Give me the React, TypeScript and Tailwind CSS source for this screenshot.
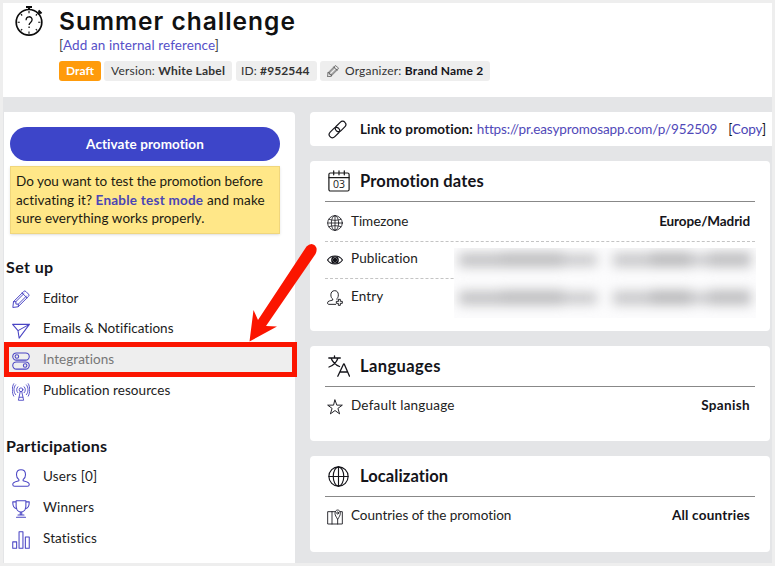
import type { ReactNode } from "react";

interface IconProps {
  className?: string;
}

function Svg({ className = "size-[18px]", children, box = 24, stroke = 1.4 }: IconProps & { children: ReactNode; box?: number; stroke?: number }) {
  return (
    <svg
      viewBox={`0 0 ${box} ${box}`}
      className={`shrink-0 ${className}`}
      fill="none"
      stroke="currentColor"
      strokeWidth={stroke}
      strokeLinecap="round"
      strokeLinejoin="round"
    >
      {children}
    </svg>
  );
}

function StopwatchIcon() {
  return (
    <svg viewBox="0 0 28 30" className="h-[30px] w-7 shrink-0" fill="none" stroke="#0c0c0c" strokeWidth="1.7">
      <circle cx="14" cy="16.3" r="12.8" />
      <path d="M11 1h6M14 1v3M23.5 4.5l3 3M25 6l-2 2" strokeWidth="2" />
      <path d="M14 5v2.2M14 25.5v2.2M2.6 16.3h2.2M23.2 16.3h2.2M5.9 8.2l1.3 1.3M22.1 8.2l-1.3 1.3M5.9 24.4l1.3-1.3M22.1 24.4l-1.3-1.3" strokeWidth="1.1" />
      <path d="M11.1 14.2c0-4.600 6-4.400 6-.4 0 2.600-3 2.600-3 5.200M14.1 20.500v1.600" strokeWidth="1.3" />
    </svg>
  );
}

function PencilIcon({ className }: IconProps) {
  return (
    <Svg className={className} stroke={1.3}>
      <path d="M1.2 22.8 2 15.5 15.5 2q1.5-1.5 3 0l3.5 3.5q1.5 1.5 0 3L8.5 22zM2 15.5h3.2v3.3h3.3V22M13.5 4l6.5 6.5M5.2 15.5 16 4.8M8.5 18.8 19.3 8" />
    </Svg>
  );
}

function SendIcon({ className }: IconProps) {
  return (
    <Svg className={className}>
      <path d="M.8 4.5h22.4L9.5 22.8 8 12.8zM8 12.8l15.2-8.3" />
    </Svg>
  );
}

function TogglesIcon({ className }: IconProps) {
  return (
    <Svg className={className}>
      <rect x="1" y="1.2" width="22" height="9.6" rx="4.8" />
      <circle cx="6.5" cy="6" r="2.4" />
      <rect x="1" y="13.2" width="22" height="9.6" rx="4.8" />
      <circle cx="17.5" cy="18" r="2.4" />
    </Svg>
  );
}

function AntennaIcon({ className }: IconProps) {
  return (
    <Svg className={className} stroke={1.2}>
      <circle cx="12" cy="9" r="2.5" />
      <path d="M11 11.5 8.5 23h7L13 11.5M9.6 19h4.8M7.8 13c-2.200-2.200-2.200-5.800 0-8M16.200 13c2.200-2.200 2.200-5.800 0-8M4.800 15.500c-3-3.500-3-9.500 0-13M19.200 15.500c3-3.500 3-9.500 0-13M2.300 17.500c-2.600-4.500-2.600-12.500 0-16.500M21.700 17.500c2.600-4.500 2.600-12.500 0-16.500" />
    </Svg>
  );
}

function UserIcon({ className }: IconProps) {
  return (
    <Svg className={className}>
      <path d="M12 1c-4 0-6 2.800-6 6.500 0 3.400 1.500 5.500 3.200 6.700v1.600C5 17 1 17.200 1 20.500 1 22.300 2 23 3.500 23h17c1.500 0 2.500-.700 2.500-2.500 0-3.300-4-3.500-8.200-4.700v-1.600C16.500 13 18 10.900 18 7.500 18 3.800 16 1 12 1z" />
    </Svg>
  );
}

function TrophyIcon({ className }: IconProps) {
  return (
    <Svg className={className}>
      <path d="M5.500 1h13v7c0 5-3 8-6.500 8s-6.500-3-6.500-8zM5.500 2.500H1c0 6 2 8.500 5.300 9M18.500 2.500H23c0 6-2 8.500-5.300 9M11 16v4M13 16v4M8 20h8M6 23h12" />
    </Svg>
  );
}

function StatsIcon({ className }: IconProps) {
  return (
    <Svg className={className}>
      <path d="M1 14.500h5.200V23H1zM9.400 1h5.200v22H9.400zM17.800 8H23v15h-5.200z" />
    </Svg>
  );
}

function LinkIcon() {
  return (
    <Svg className="size-[19px]" stroke={1.5}>
      <path d="M10.500 13.500C8.600 11.500 8.700 9.600 10.400 7.900l5-5c2-2 4.400-1.900 6 0 1.700 1.800 1.600 4-.200 5.800l-4.700 4.700c-1.900 1.900-4 1.800-6 .100" />
      <path d="M13.500 10.500c1.900 2 1.800 3.900.100 5.600l-5 5c-2 2-4.400 1.900-6 0-1.700-1.800-1.600-4 .200-5.800l4.700-4.700c1.900-1.900 4-1.800 6-.100" />
    </Svg>
  );
}

function CalendarIcon() {
  return (
    <div className="relative h-[22px] w-[22px] shrink-0 text-[#191919]">
      <Svg className="size-[22px]" box={22} stroke={1.2}>
        <rect x=".9" y="3" width="20.200" height="18" rx="1.500" />
        <path d="M1 7.700h20M5.700.800v4M11 .800v4M16.300.800v4" />
      </Svg>
      <span className="absolute inset-x-0 top-[8px] text-center font-['Open_Sans',sans-serif] text-[10.500px] leading-[12px] font-medium">03</span>
    </div>
  );
}

function GlobeIcon({ className }: IconProps) {
  return (
    <Svg className={className} stroke={1.2}>
      <circle cx="12" cy="12" r="11" />
      <ellipse cx="12" cy="12" rx="5.500" ry="11" />
      <path d="M12 1v22M1 12h22M3 6.500c5 2 13 2 18 0M3 17.500c5-2 13-2 18 0" />
    </Svg>
  );
}

function BigGlobeIcon() {
  return (
    <Svg className="mr-px size-[21px]" stroke={1.300}>
      <circle cx="12" cy="12" r="11" />
      <ellipse cx="12" cy="12" rx="6" ry="11" />
      <path d="M12 1v22M1 12h22" />
    </Svg>
  );
}

function EyeIcon() {
  return (
    <Svg className="size-4" stroke={1.800}>
      <path d="M.8 12C6 4 18 4 23.200 12 18 20 6 20 .8 12z" />
      <circle cx="12" cy="12" r="4.700" strokeWidth="2.200" />
      <circle cx="12" cy="12" r="2.400" fill="currentColor" />
    </Svg>
  );
}

function UserPlusIcon() {
  return (
    <Svg className="size-4">
      <path d="M13 21.500H3c-1.500 0-2.200-.700-2.200-2.200 0-3 4-3 7.800-4.200v-1.500C7 12.500 5.800 10.500 5.800 7.200 5.800 3.500 8 1 11.500 1S17 3.500 17 7.200c0 3.300-1 5.300-2.500 6.400" />
      <path d="M17 14h3v3h3v3h-3v3h-3v-3h-3v-3h3z" />
    </Svg>
  );
}

function TranslateIcon() {
  return (
    <Svg className="size-[22px]" box={22} stroke={1.300}>
      <path d="M.8 3h11.500M6.500.800V3M3 3c1.500 4 5 7 8.500 8.500M10 3C8.500 7.500 5 10.500 1 12M9.800 21.200 15.600 9h.6L21.500 21.200M12 17h7.700" />
    </Svg>
  );
}

function StarIcon() {
  return (
    <Svg className="size-4" stroke={1.400}>
      <path d="m12 1.500 2.700 7.700H23l-6.600 4.900 2.500 8.200-6.900-5-6.900 5 2.500-8.200L1 9.200h8.300z" />
    </Svg>
  );
}

function MapIcon() {
  return (
    <Svg className="size-4" stroke={1.300}>
      <path d="M12 4H1v18.500h22V4h-3M7.500 4v18.500M16 17v5.500" />
      <path d="M16 15.500c-2.200-3.700-4-6-4-9 0-3 1.800-5 4-5s4 2 4 5c0 3-1.800 5.300-4 9z" />
      <circle cx="16" cy="6" r="1.500" />
    </Svg>
  );
}

interface MenuItem {
  label: string;
  icon: (props: IconProps) => ReactNode;
  row: string;
  tracking: string;
  active?: boolean;
}

const setupItems: MenuItem[] = [
  { label: "Editor", icon: PencilIcon, row: "h-[30px]", tracking: "tracking-[-0.05px]" },
  { label: "Emails & Notifications", icon: SendIcon, row: "h-[31px]", tracking: "tracking-[0.02px]" },
  { label: "Integrations", icon: TogglesIcon, row: "h-[31px]", tracking: "tracking-[0.05px]", active: true },
  { label: "Publication resources", icon: AntennaIcon, row: "h-[31px]", tracking: "tracking-[0.06px]" },
];

const participationItems: MenuItem[] = [
  { label: "Users [0]", icon: UserIcon, row: "h-[31px]", tracking: "tracking-[0.15px]" },
  { label: "Winners", icon: TrophyIcon, row: "h-[31px]", tracking: "tracking-[0.15px]" },
  { label: "Statistics", icon: StatsIcon, row: "h-[31px]", tracking: "tracking-[0.12px]" },
];

function Menu({ items }: { items: MenuItem[] }) {
  return (
    <ul>
      {items.map((item) => {
        const Icon = item.icon;
        return (
          <li key={item.label} className={`flex items-center pl-2 ${item.row} ${item.active ? "bg-[#eeeeee] text-[#777]" : "text-[#1c1c1c]"}`}>
            <Icon className="mt-0.5 size-[18px] text-[#4a45c4]" />
            <span className={`ml-[13px] text-[13.5px] ${item.tracking}`}>{item.label}</span>
          </li>
        );
      })}
    </ul>
  );
}

function Sidebar() {
  return (
    <aside className="relative ml-[1px] h-[451px] w-[291px] rounded-tr bg-white">
      <div className="px-1.5 pt-[15px]">
        <button className="block h-[34px] w-[270px] rounded-full bg-[#3d45c9] text-[13.5px] font-bold tracking-[0.08px] text-white">
          Activate promotion
        </button>
        <div className="mt-[5px] h-[68px] w-[270px] border border-[#f0d67c] bg-[#ffe788] px-[5px] pt-[5px] text-[13.5px] leading-[18.5px] whitespace-nowrap text-[#1c1a12] shadow-sm">
          <span className="tracking-[-0.02px]">Do you want to test the promotion before</span>
          <br />
          <span className="tracking-[0.08px]">activating it? </span>
          <b className="tracking-[0.24px] text-[#4a45b5]">Enable test mode</b>
          <span className="tracking-[0.16px]"> and make</span>
          <br />
          <span className="tracking-[0.07px]">sure everything works properly.</span>
        </div>
      </div>
      <h2 className="mt-[23px] ml-[2px] h-[20px] text-[16px] leading-5 font-bold tracking-[0.4px]">Set up</h2>
      <div className="mt-[6px]">
        <Menu items={setupItems} />
      </div>
      <h2 className="mt-[30px] ml-[2px] h-[20px] text-[16px] leading-5 font-bold tracking-[0.24px]">Participations</h2>
      <div className="mt-[5px]">
        <Menu items={participationItems} />
      </div>
      <div className="absolute top-[230px] left-0 h-[35px] w-[293px] border-[5px] border-[#fb1500]" />
    </aside>
  );
}

interface CardProps {
  className: string;
  icon: ReactNode;
  title: string;
  tracking: string;
  children: ReactNode;
}

function Card({ className, icon, title, tracking, children }: CardProps) {
  return (
    <section className={`w-[460px] rounded bg-white px-[15px] ${className}`}>
      <header className="flex h-[41px] items-center border-b border-[#888] pl-[3px]">
        {icon}
        <h2 className={`ml-[10px] text-[16.5px] font-bold ${tracking}`}>{title}</h2>
      </header>
      {children}
    </section>
  );
}

interface RowProps {
  icon: ReactNode;
  label: string;
  value?: string;
  className?: string;
  labelTracking?: string;
  valueTracking?: string;
}

function Row({ icon, label, value, className = "", labelTracking = "tracking-[0.1px]", valueTracking = "tracking-[0.22px]" }: RowProps) {
  return (
    <div className={`flex items-center pr-[5px] pl-[2px] text-[13.5px] ${className}`}>
      <span className="mt-[3px]">{icon}</span>
      <span className={`ml-2 text-[#222] ${labelTracking}`}>{label}</span>
      {value && <span className={`ml-auto font-bold ${valueTracking}`}>{value}</span>}
    </div>
  );
}

function HiddenDate() {
  return (
    <div className="flex h-[15px] items-center pl-[5px] blur-[6px]">
      <span className="h-3.5 w-[42px] bg-[#c2c2c4]" />
      <span className="h-[15px] w-[62px] bg-[#bdbdbf]" />
      <span className="h-3 w-[34px] bg-[#c8c8ca]" />
      <span className="ml-[16px] h-3.5 w-[38px] bg-[#c8c8ca]" />
      <span className="h-[15px] w-[40px] bg-[#b9b9bb]" />
      <span className="h-3 w-[18px] bg-[#cacacc]" />
      <span className="h-[15px] w-[42px] bg-[#bebec0]" />
    </div>
  );
}

export default function App() {
  return (
    <div className="relative h-[566px] w-[775px] overflow-hidden border-[3px] border-[#eeeeee] bg-[#e4e5e7] font-['Lato',sans-serif] text-[#14141a]">
      <header className="flex h-[94px] bg-white pl-3">
        <div className="pt-[3px]">
          <StopwatchIcon />
        </div>
        <div className="ml-4">
          <h1 className="mt-[3px] h-[30px] font-['Inter',sans-serif] text-[24.5px] leading-[30px] font-semibold tracking-[1px] text-[#111]">Summer challenge</h1>
          <p className="mt-[-1px] h-[20px] text-[13.5px] leading-5 tracking-[0.1px] text-[#444]">
            [<a className="text-[#5650c8]">Add an internal reference</a>]
          </p>
          <div className="mt-[6px] flex h-5 text-[12px] leading-5 whitespace-nowrap text-[#333]">
            <span className="w-[42px] rounded-[3px] bg-[#ff9b0b] text-center font-bold text-white">Draft</span>
            <span className="ml-[3px] w-[128px] rounded-[3px] bg-[#eeeeee] pl-[7px] tracking-[0.2px]">
              Version: <b>White Label</b>
            </span>
            <span className="ml-1 w-[81px] rounded-[3px] bg-[#eeeeee] pl-[5px] tracking-[0.12px]">
              ID: <b>#952544</b>
            </span>
            <span className="ml-[3px] flex w-[170px] items-center rounded-[3px] bg-[#eeeeee] pl-[7px]">
              <PencilIcon className="size-3" />
              <span className="ml-[6px] tracking-[0.2px]">
                Organizer: <b className="text-[#14141a]">Brand Name 2</b>
              </span>
            </span>
          </div>
        </div>
      </header>

      <div className="flex pt-[15px]">
        <Sidebar />
        <main className="ml-[15px]">
          <div className="flex h-[34px] w-[462px] items-center rounded-l bg-white pl-[18px] text-[13.5px] whitespace-nowrap">
            <LinkIcon />
            <b className="ml-[13px] tracking-[0.1px]">Link to promotion:</b>
            <a className="ml-1 tracking-[-0.13px] text-[#5048b8]">https://pr.easypromosapp.com/p/952509</a>
            <span className="mr-[6px] ml-auto tracking-[-0.1px]">
              [<a className="text-[#4a45b5]">Copy</a>]
            </span>
          </div>

          <Card className="mt-[15px] h-[170px]" icon={<CalendarIcon />} title="Promotion dates" tracking="tracking-[0.16px]">
            <Row className="h-[39px] pb-px" icon={<GlobeIcon className="size-4" />} label="Timezone" value="Europe/Madrid" labelTracking="tracking-[-0.05px]" valueTracking="tracking-[-0.1px]" />
            <div className="relative border-t border-dashed border-[#c4c4c4]">
              <Row className="h-[36px] pb-[3px]" icon={<EyeIcon />} label="Publication" />
              <Row className="h-[36px] border-t border-dashed border-[#c4c4c4]" icon={<UserPlusIcon />} label="Entry" />
              <div className="absolute top-[6px] left-[129px] h-[70px] w-[302px] overflow-hidden bg-[#fcfcfd] pt-[4px]">
                <HiddenDate />
                <div className="mt-[23px]">
                  <HiddenDate />
                </div>
              </div>
            </div>
          </Card>

          <Card className="mt-[15px] h-[95px]" icon={<TranslateIcon />} title="Languages" tracking="tracking-[0.4px]">
            <Row className="h-[38px] pb-px" icon={<StarIcon />} label="Default language" value="Spanish" labelTracking="tracking-[0.2px]" valueTracking="tracking-[0.35px]" />
          </Card>

          <Card className="mt-[15px] h-[96px]" icon={<BigGlobeIcon />} title="Localization" tracking="tracking-[0.08px]">
            <Row className="h-[38px] pb-px" icon={<MapIcon />} label="Countries of the promotion" value="All countries" labelTracking="tracking-[-0.03px]" />
          </Card>
        </main>
      </div>

      {/* pointer to the Integrations entry */}
      <svg viewBox="0 0 80 110" className="absolute top-[237px] left-[237px] h-[110px] w-20" fill="#fb1500">
        <path d="M66.500 6.500Q71 2 75 5.500 78 9 75.500 14L26 86l11 .500L9.500 101.500 13.500 70l4.500 10z" />
      </svg>
    </div>
  );
}
